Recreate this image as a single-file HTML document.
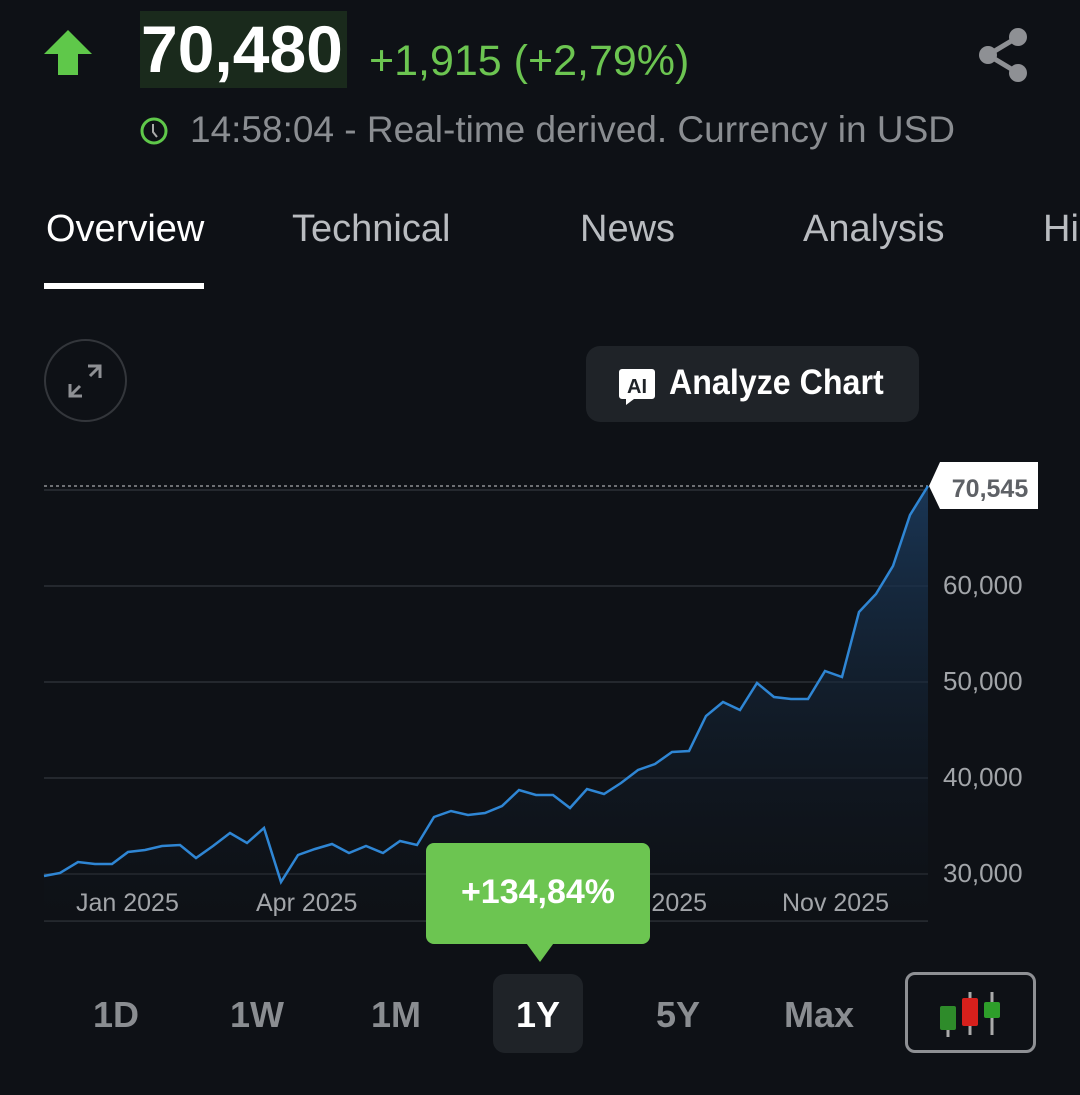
<!DOCTYPE html>
<html><head><meta charset="utf-8"><style>
*{margin:0;padding:0;box-sizing:border-box}
body{width:1080px;height:1095px;background:#0e1116;font-family:"Liberation Sans",sans-serif;position:relative;overflow:hidden;color:#fff}
.a{position:absolute;white-space:nowrap}
.tab{font-size:38px;color:#b9bcc0;top:208px}
.per{font-size:36px;color:#8a8d91;top:994px;font-weight:bold}
.ax{font-size:25px;color:#a2a5a9}
</style></head><body>
<svg class="a" style="left:44px;top:30px" width="48" height="45" viewBox="0 0 48 45"><path d="M24 0 L48 24 L34 24 L34 45 L14 45 L14 24 L0 24Z" fill="#5fc84a"/></svg>
<div class="a" style="left:140px;top:11px;width:207px;height:77px;background:#1a2a1c"></div>
<div class="a" style="left:141px;top:11px;font-size:66px;font-weight:bold">70,480</div>
<div class="a" style="left:369px;top:37px;font-size:43px;color:#6cc551">+1,915 (+2,79%)</div>
<svg class="a" style="left:976px;top:27px" width="54" height="56" viewBox="0 0 54 56"><g fill="#8e9094"><circle cx="42" cy="10" r="9"/><circle cx="12" cy="28" r="9"/><circle cx="42" cy="46" r="9"/></g><path d="M42 10 L12 28 L42 46" stroke="#8e9094" stroke-width="5" fill="none"/></svg>
<svg class="a" style="left:139px;top:116px" width="30" height="30" viewBox="0 0 30 30"><circle cx="15" cy="15" r="12" stroke="#5fc84a" stroke-width="3" fill="none"/><path d="M14 8 L14 16 L18 21" stroke="#aaa" stroke-width="2" fill="none"/></svg>
<div class="a" style="left:190px;top:109px;font-size:37px;color:#8a8d91">14:58:04 - Real-time derived. Currency in USD</div>
<div class="a tab" style="left:46px;color:#fff">Overview</div>
<div class="a tab" style="left:292px">Technical</div>
<div class="a tab" style="left:580px">News</div>
<div class="a tab" style="left:803px">Analysis</div>
<div class="a tab" style="left:1043px">Hi</div>
<div class="a" style="left:44px;top:283px;width:160px;height:6px;background:#fff"></div>
<div class="a" style="left:44px;top:339px;width:83px;height:83px;border-radius:50%;border:2px solid #33363b"></div>
<svg class="a" style="left:62px;top:358px" width="46" height="46" viewBox="0 0 46 46"><path d="M26 8h12v12M38 8L28 18M20 38H8V26M8 38l10-10" stroke="#8e9094" stroke-width="3" fill="none"/></svg>
<div class="a" style="left:586px;top:346px;width:333px;height:76px;border-radius:14px;background:#1f2328"></div>
<svg class="a" style="left:618px;top:367px" width="40" height="40" viewBox="0 0 40 40"><path d="M4 2h30a3 3 0 0 1 3 3v24a3 3 0 0 1-3 3H16l-8 6v-6H4a3 3 0 0 1-3-3V5a3 3 0 0 1 3-3z" fill="#fff"/><text x="19" y="26" font-family="Liberation Sans" font-weight="bold" font-size="20" fill="#1f2328" text-anchor="middle">AI</text></svg>
<div class="a" style="left:669px;top:363px;font-size:35px;font-weight:bold;transform:scaleX(0.92);transform-origin:left">Analyze Chart</div>
<svg class="a" style="left:0;top:460px" width="1080" height="480" viewBox="0 460 1080 480">
<defs><linearGradient id="g" x1="0" y1="0" x2="0" y2="1"><stop offset="0" stop-color="#1b3a5c" stop-opacity="0.9"/><stop offset="1" stop-color="#0e1116" stop-opacity="0.2"/></linearGradient></defs>
<g stroke="#2c3036" stroke-width="1.5"><line x1="44" y1="490" x2="928" y2="490"/><line x1="44" y1="586" x2="928" y2="586"/><line x1="44" y1="682" x2="928" y2="682"/><line x1="44" y1="778" x2="928" y2="778"/><line x1="44" y1="874" x2="928" y2="874"/><line x1="44" y1="921" x2="928" y2="921"/></g>
<line x1="44" y1="486" x2="928" y2="486" stroke="#8e9094" stroke-width="1.5" stroke-dasharray="3,3"/>
<path d="M44 876L60 873L78 862L95 864L112 864L128 852L145 850L162 846L180 845L196 858L213 846L230 833L247 843L264 828L281 882L298 855L315 849L332 844L349 853L366 846L383 853L400 841L417 845L434 817L451 811L468 815L485 813L502 806L519 790L536 795L553 795L570 808L587 789L604 794L621 783L638 770L655 764L672 752L689 751L706 716L723 702L740 710L757 683L774 697L791 699L808 699L825 671L842 677L859 612L876 594L893 566L910 515L928 486L928 921L44 921Z" fill="url(#g)"/>
<path d="M44 876L60 873L78 862L95 864L112 864L128 852L145 850L162 846L180 845L196 858L213 846L230 833L247 843L264 828L281 882L298 855L315 849L332 844L349 853L366 846L383 853L400 841L417 845L434 817L451 811L468 815L485 813L502 806L519 790L536 795L553 795L570 808L587 789L604 794L621 783L638 770L655 764L672 752L689 751L706 716L723 702L740 710L757 683L774 697L791 699L808 699L825 671L842 677L859 612L876 594L893 566L910 515L928 486" fill="none" stroke="#2f86d4" stroke-width="2.5"/>
<path d="M929 486L940 462H1038V509H940Z" fill="#fff"/>
<text x="990" y="497" font-family="Liberation Sans" font-weight="bold" font-size="25" fill="#5e6166" text-anchor="middle">70,545</text>
</svg>
<div class="a ax" style="left:943px;top:570px;font-size:26px">60,000</div>
<div class="a ax" style="left:943px;top:666px;font-size:26px">50,000</div>
<div class="a ax" style="left:943px;top:762px;font-size:26px">40,000</div>
<div class="a ax" style="left:943px;top:858px;font-size:26px">30,000</div>
<div class="a ax" style="left:76px;top:889px">Jan 2025</div>
<div class="a ax" style="left:256px;top:889px">Apr 2025</div>
<div class="a ax" style="left:600px;top:889px">Aug 2025</div>
<div class="a ax" style="left:782px;top:889px">Nov 2025</div>
<div class="a" style="left:426px;top:843px;width:224px;height:101px;background:#6cc551;border-radius:8px"></div>
<div class="a" style="left:524px;top:940px;width:0;height:0;border-left:16px solid transparent;border-right:16px solid transparent;border-top:22px solid #6cc551"></div>
<div class="a" style="left:426px;top:873px;width:224px;text-align:center;font-size:34px;font-weight:bold">+134,84%</div>
<div class="a" style="left:493px;top:974px;width:90px;height:79px;background:#1f2328;border-radius:12px"></div>
<div class="a per" style="left:93px">1D</div>
<div class="a per" style="left:230px">1W</div>
<div class="a per" style="left:371px">1M</div>
<div class="a per" style="left:516px;color:#fff">1Y</div>
<div class="a per" style="left:656px">5Y</div>
<div class="a per" style="left:784px">Max</div>
<div class="a" style="left:905px;top:972px;width:131px;height:81px;border:3px solid #8e9094;border-radius:10px"></div>
<svg class="a" style="left:935px;top:990px" width="70" height="48" viewBox="0 0 70 48"><g stroke="#aaa" stroke-width="3"><line x1="13" y1="18" x2="13" y2="47"/><line x1="35" y1="2" x2="35" y2="45"/><line x1="57" y1="2" x2="57" y2="45"/></g><rect x="5" y="16" width="16" height="24" rx="2" fill="#2e8b2a"/><rect x="27" y="8" width="16" height="28" rx="2" fill="#d6201c"/><rect x="49" y="12" width="16" height="16" rx="2" fill="#2e9e2a"/></svg>
</body></html>
